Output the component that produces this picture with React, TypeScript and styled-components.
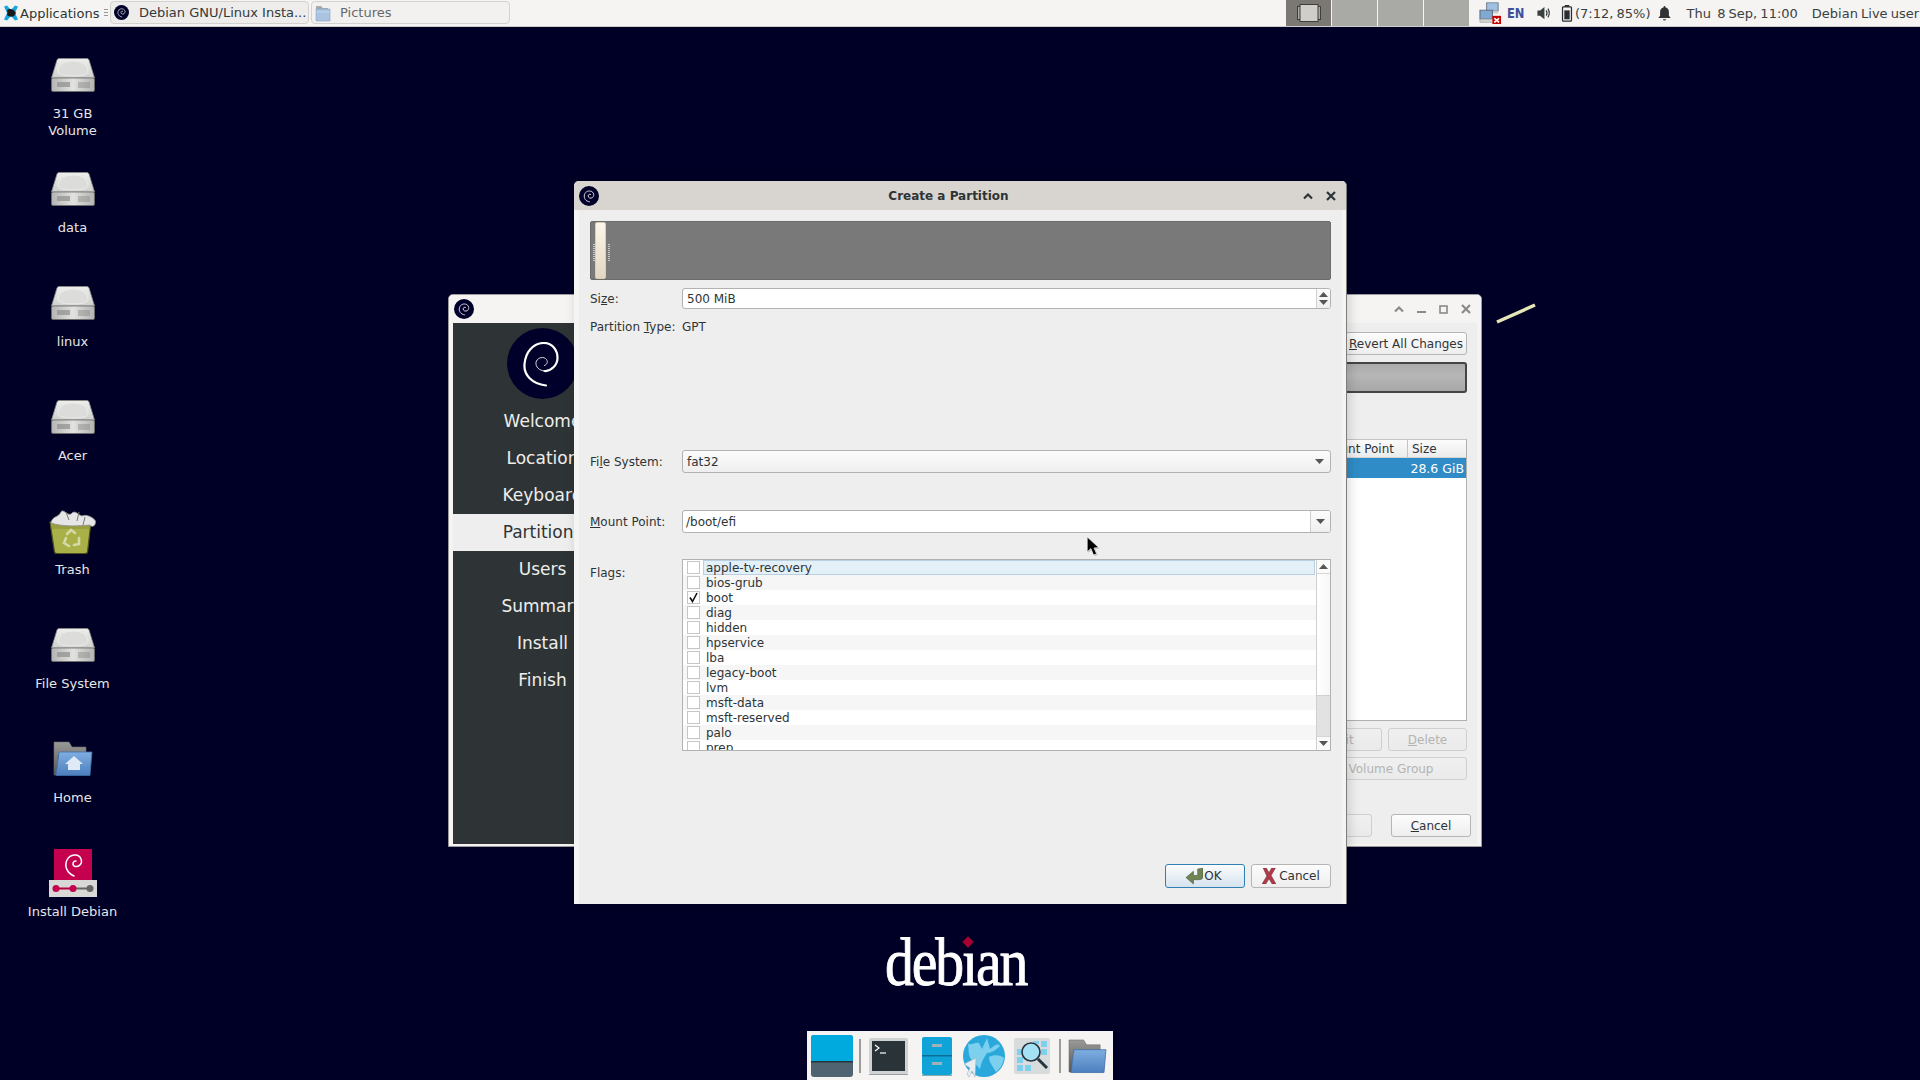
import React from "react";
import styled, { createGlobalStyle } from "styled-components";

const Global = createGlobalStyle`
  html, body { margin: 0; padding: 0; width: 1920px; height: 1080px; overflow: hidden; background: #000026; }
  * { box-sizing: border-box; }
  #root { font-family: "DejaVu Sans", sans-serif; font-size: 12px; color: #2e3436; }
`;

const Desktop = styled.div`
  position: relative; width: 1920px; height: 1080px; overflow: hidden; background: #000026;
`;

/* ---------- top panel ---------- */
const Panel = styled.header`
  display: flex; align-items: stretch; height: 27px; background: #f5f4f2;
  border-bottom: 1px solid #cfcdc9; font-size: 13px; color: #3a3f41; white-space: nowrap;
`;
const AppMenu = styled.div`
  display: flex; align-items: center; gap: 1px; width: 104px; padding-left: 3px; color: #2e3436;
`;
const Handle = styled.div`
  margin: 9px 2px 9px 0; width: 4px;
  background: repeating-linear-gradient(to bottom, #9a9a98 0 1px, transparent 1px 3px);
`;
const TaskList = styled.div`
  display: flex; gap: 2px; padding: 1px 0 2px;
`;
const TaskButton = styled.div<{ $dim?: boolean }>`
  display: flex; align-items: center; gap: 10px; width: 199px; padding: 0 3px;
  border: 1px solid #d4d2ce; border-radius: 4px;
  background: ${(p) => (p.$dim ? "#f2f1ef" : "#eeedeb")};
  color: ${(p) => (p.$dim ? "#66696a" : "#33383a")};
`;
const PanelFill = styled.div` flex: 1; `;
const Pager = styled.div` display: flex; gap: 1px; margin-right: 10px; `;
const PagerCell = styled.div<{ $active?: boolean }>`
  display: flex; align-items: center; justify-content: center; width: 45px;
  background: ${(p) => (p.$active ? "#7b7772" : "#a9a9a5")};
`;
const Tray = styled.div`
  display: flex; align-items: center; width: 441px; word-spacing: -1px;
`;
const Lang = styled.span`
  font-weight: 700; color: #3d4f9c; transform: scaleX(0.82); transform-origin: left center;
  width: 22px; margin-left: 6px; margin-right: 5px; font-size: 14px;
`;
const TrayText = styled.span<{ $gap?: number }>`
  margin-left: ${(p) => p.$gap ?? 0}px;
`;
const TrayIcon = styled.span<{ $gap?: number }>`
  display: flex; margin-left: ${(p) => p.$gap ?? 0}px;
`;

/* ---------- desktop icons ---------- */
const IconColumn = styled.div`
  position: absolute; left: 0; top: 51px; width: 145px; display: flex; flex-direction: column;
`;
const DesktopItem = styled.div`
  height: 114px; display: flex; flex-direction: column; align-items: center;
`;
const IconSlot = styled.div`
  height: 48px; display: flex; align-items: center; justify-content: center;
`;
const IconLabel = styled.div`
  margin-top: 6px; font-size: 13px; line-height: 17px; text-align: center; color: #e6e6e6; width: 110px;
`;

/* ---------- windows ---------- */
const BackWindow = styled.section`
  position: absolute; left: 448px; top: 294px; width: 1034px; height: 553px;
  display: flex; flex-direction: column; background: #f5f4f2;
  border-radius: 5px 5px 0 0; border: 1px solid #9a9a98; overflow: hidden;
`;
const BackTitle = styled.div`
  height: 28px; flex: none; display: flex; align-items: center; padding: 0 10px 0 5px;
  background: #f5f4f2; color: #777;
`;
const TitleButtons = styled.div<{ $gap: number }>`
  margin-left: auto; display: flex; gap: ${(p) => p.$gap}px; align-items: center;
`;
const BackBody = styled.div`
  flex: 1; display: flex; margin: 0 4px 2px 4px; min-height: 0; background: #eeeeee;
`;
const Sidebar = styled.nav`
  width: 179px; flex: none; display: flex; flex-direction: column; align-items: stretch;
  background: #2e3436; padding-top: 5px;
`;
const LogoWrap = styled.div`
  display: flex; justify-content: center; height: 75px;
`;
const Logo = styled.div`
  width: 71px; height: 71px; border-radius: 50%; background: #00002a;
  display: flex; align-items: center; justify-content: center;
`;
const Step = styled.div<{ $on?: boolean }>`
  height: 37px; padding-bottom: 2px; display: flex; align-items: center; justify-content: center; font-size: 17px;
  background: ${(p) => (p.$on ? "#eeeeee" : "transparent")};
  color: ${(p) => (p.$on ? "#2e3436" : "#eeeeec")};
`;
const BackMain = styled.div`
  flex: 1; display: flex; flex-direction: column; padding: 9px 10px 7px 1px; min-width: 0;
`;
const ToolRow = styled.div` display: flex; justify-content: flex-end; `;
const Btn = styled.div<{ $w?: number; $off?: boolean }>`
  width: ${(p) => (p.$w ? p.$w + "px" : "auto")}; height: 23px; padding: 0 4px; white-space: nowrap;
  display: flex; align-items: center; justify-content: center; gap: 3px;
  border: 1px solid ${(p) => (p.$off ? "#cfcfcf" : "#b5b5b3")}; border-radius: 3px;
  background: ${(p) => (p.$off ? "linear-gradient(#f0f0f0,#eaeaea)" : "linear-gradient(#fcfcfc,#eeeeee)")};
  color: ${(p) => (p.$off ? "#b4b4b4" : "#2e3436")};
`;
const DiskBar = styled.div`
  height: 31px; margin-top: 7px; border: 2px solid #444; border-radius: 3px;
  background: linear-gradient(#aaaaaa, #b6b6b6 40%, #a8a8a8);
`;
const Table = styled.div`
  margin-top: 46px; height: 282px; border: 1px solid #b0b0ae; border-top-color: #c4c4c2; background: #fff;
`;
const TableHead = styled.div`
  display: flex; height: 18px; align-items: center; background: linear-gradient(#fbfbfb,#ececec);
  border-bottom: 1px solid #d4d4d2;
`;
const HeadCell = styled.div<{ $w?: number }>`
  ${(p) => (p.$w ? `width:${p.$w}px;` : "flex:1;")} padding: 0 13px 0 4px; height: 100%;
  display: flex; align-items: center; justify-content: flex-end;
  &:last-child { justify-content: flex-start; border-left: 1px solid #c4c4c2; padding: 0 4px; }
`;
const TableRow = styled.div`
  height: 20px; display: flex; align-items: center; justify-content: flex-end; padding-right: 2px;
  background: #308cc6; color: #fff; font-size: 12.5px;
`;
const ButtonRow = styled.div<{ $top: number; $end?: number; $gap?: number }>`
  display: flex; justify-content: flex-end; gap: ${(p) => p.$gap ?? 6}px; margin-top: ${(p) => p.$top}px;
  margin-right: ${(p) => p.$end ?? 0}px;
`;

/* ---------- dialog ---------- */
const Dialog = styled.section`
  position: absolute; left: 574px; top: 181px; width: 773px; height: 723px;
  display: flex; flex-direction: column; border-radius: 5px 5px 0 0; overflow: hidden;
  background: #f4f4f3; border-right: 1px solid #7d7d7b;
  box-shadow: 2px 0 12px rgba(0, 0, 0, 0.16);
`;
const DialogTitle = styled.div`
  position: relative; flex: none; height: 29px; display: flex; align-items: center; padding: 0 10px 0 5px;
  background: #d8d5d1; color: #2e3436;
`;
const TitleText = styled.div`
  position: absolute; left: 0; right: 23px; text-align: center; font-weight: 700;
`;
const DialogBody = styled.div`
  flex: 1; display: flex; flex-direction: column; margin: 0 4px 0 5px; padding: 11px 11px 0; background: #eeeeee;
`;
const PartBar = styled.div`
  position: relative; height: 59px; flex: none; border: 1px solid #6c6c6c; border-radius: 2px; background: #797979;
`;
const PartHandle = styled.div`
  position: absolute; left: 4px; top: 0; bottom: 0; width: 11px; border: 1px solid #d9cdb6; border-radius: 2px;
  background: linear-gradient(#fdf6e8, #e2d7c3);
`;
const Grip = styled.div<{ $x: number }>`
  position: absolute; left: ${(p) => p.$x}px; top: 22px; width: 2px; height: 18px;
  background: repeating-linear-gradient(to bottom, #c8c8c8 0 1px, transparent 1px 2px);
`;
const FormRow = styled.div<{ $top: number; $h?: number }>`
  display: grid; grid-template-columns: 92px 1fr; align-items: center; flex: none;
  height: ${(p) => p.$h ?? 23}px; margin-top: ${(p) => p.$top}px;
`;
const FieldLabel = styled.label``;
const Field = styled.div`
  display: flex; align-items: stretch; height: 100%; background: #fff;
  border: 1px solid #b2b2b0; border-radius: 3px; overflow: hidden;
`;
const FieldText = styled.div<{ $pad?: number }>`
  flex: 1; display: flex; align-items: center; padding-left: ${(p) => p.$pad ?? 4}px; color: #2e3436;
`;
const ComboField = styled(Field)`
  background: linear-gradient(#fcfcfc, #eeeeee);
`;
const SideButton = styled.div<{ $w: number }>`
  width: ${(p) => p.$w}px; flex: none; display: flex; flex-direction: column; align-items: center; justify-content: center; gap: 3px;
  border-left: 1px solid #cfcfcd; background: linear-gradient(#fcfcfc, #efefef);
`;
const PlainArrow = styled.div`
  width: 22px; flex: none; display: flex; align-items: center; justify-content: center;
`;
const FlagsRow = styled.div`
  display: grid; grid-template-columns: 92px 1fr; flex: none; margin-top: 26px; height: 192px;
`;
const FlagsLabel = styled.label` margin-top: 7px; `;
const FlagsBox = styled.div`
  display: flex; border: 1px solid #b2b2b0; background: #fff; min-width: 0; overflow: hidden;
`;
const FlagsList = styled.div` flex: 1; overflow: hidden; `;
const Flag = styled.div<{ $alt: boolean }>`
  position: relative; height: 15px; display: flex; align-items: center; padding-left: 4px; gap: 6px;
  background: ${(p) => (p.$alt ? "#f6f6f6" : "#fff")};
`;
const FlagSelect = styled.div`
  position: absolute; left: 20px; right: 1px; top: 0; bottom: 0; background: #e4f0f8; border: 1px solid #b9d0e2;
`;
const Check = styled.div`
  position: relative; width: 13px; height: 13px; flex: none; background: #fff; border: 1px solid #c6c6c4;
  display: flex; align-items: center; justify-content: center;
`;
const FlagText = styled.span` position: relative; line-height: 15px; padding-top: 2px; `;
const ScrollBar = styled.div`
  width: 14px; flex: none; display: flex; flex-direction: column; border-left: 1px solid #cfcfcd;
  background: linear-gradient(90deg, #ffffff, #f6f6f6);
`;
const ScrollEnd = styled.div`
  height: 13px; flex: none; display: flex; align-items: center; justify-content: center; background: #fafafa;
`;
const ScrollTrack = styled.div`
  flex: 1; display: flex; flex-direction: column; justify-content: flex-end;
  border-top: 1px solid #d6d6d4; border-bottom: 1px solid #d6d6d4;
`;
const ScrollThumb = styled.div` height: 41px; background: #e2e2e2; border-top: 1px solid #d0d0d0; `;
const DialogActions = styled.div`
  display: flex; justify-content: flex-end; gap: 6px; margin-top: 113px;
`;
const ActionBtn = styled(Btn)<{ $def?: boolean }>`
  width: 80px; height: 24px;
  ${(p) => p.$def && "border-color:#2f7fb0; background: linear-gradient(#fbfcfd,#d5e3ee); gap: 1px; padding-right: 6px;"}
`;

/* ---------- overlays ---------- */
const Streak = styled.svg` position: absolute; left: 1495px; top: 302px; `;
const Cursor = styled.svg` position: absolute; left: 1086px; top: 536px; `;
const Wordmark = styled.div`
  position: absolute; left: 873px; top: 924px; width: 160px; height: 76px;
  font-family: "Liberation Serif", serif; font-size: 68px; line-height: 76px; color: #fff;
  text-align: center; letter-spacing: -2.5px; transform: scaleX(0.85); -webkit-text-stroke: 0.9px #fff;
`;
const Diamond = styled.div`
  position: absolute; left: 964px; top: 938px; width: 8px; height: 8px; background: #a80030; transform: rotate(45deg);
`;
const Dock = styled.div`
  position: absolute; left: 807px; top: 1031px; width: 306px; height: 49px; background: #f5f4f2;
  display: flex; align-items: center; padding: 4px 0 3px 4px;
`;
const DockSep = styled.div<{ $l: number; $r: number }>`
  width: 2px; height: 34px; margin: 0 ${(p) => p.$r}px 0 ${(p) => p.$l}px; background: #9c9c9a;
`;
const DockIcon = styled.div<{ $r?: number }>` display: flex; margin-right: ${(p) => p.$r ?? 0}px; `;

/* ---------- drawings ---------- */
const Swirl = () => (
  <svg width="36" height="45" viewBox="0 0 36 45" fill="none" style={{ transform: "translate(-2px, 1px)" }}>
    <path d="M23 43.5C9 42 0.5 33 1.5 22C2.5 10 10 1.5 20 1C29 0.5 34.5 8 34.5 16C34.5 23 28 29.5 21.5 29" stroke="#fff" strokeWidth="2.2" strokeLinecap="round" />
    <path d="M21.5 29C16 28.5 12.5 25 13 20.5C13.6 16.5 19 14 22.5 16.5C25.5 19 24.5 22.5 21.5 23.5" stroke="#dcdcdc" strokeWidth="1" strokeLinecap="round" />
  </svg>
);
const SwirlBadge = ({ size }: { size: number }) => (
  <svg width={size} height={size} viewBox="0 0 24 24" fill="none" style={{ flex: "none" }}>
    <circle cx="12" cy="12" r="12" fill="#00002a" />
    <path d="M12.5 19C8 18.5 5.5 14.5 6.5 10.5C7.5 6.5 12 5 15.3 6.7C18.2 8.4 18.4 12.4 16 14C14 15.2 11.2 14.4 11 12C10.9 10.4 12.4 9.4 13.8 10" stroke="#e8e8e8" strokeWidth="1.1" strokeLinecap="round" />
  </svg>
);
const Hdd = () => (
  <svg width="44" height="34" viewBox="0 0 44 34">
    <defs>
      <linearGradient id="hddTop" x1="0" y1="0" x2="0" y2="1"><stop offset="0" stopColor="#eeeeec" /><stop offset="1" stopColor="#cfd0cd" /></linearGradient>
      <linearGradient id="hddFront" x1="0" y1="0" x2="1" y2="0"><stop offset="0" stopColor="#b4b4b2" /><stop offset="0.5" stopColor="#e2e2e0" /><stop offset="1" stopColor="#b2b2b0" /></linearGradient>
    </defs>
    <path d="M8 .5H36Q37.5.5 38 2L43.5 20H.5L6 2Q6.5.5 8 .5Z" fill="url(#hddTop)" stroke="#8a8a88" strokeWidth=".8" />
    <path d="M7 14C7 6 14 3 22 3C30 3 37 6 37 14C37 17 30 18 22 18C14 18 7 17 7 14Z" fill="#dcdddb" stroke="#efefee" strokeWidth=".8" />
    <rect x=".5" y="20" width="43" height="13.5" rx="1.5" fill="url(#hddFront)" stroke="#6f6f6d" strokeWidth=".8" />
    <rect x="6" y="24" width="13" height="5" fill="#8f8f8d" opacity=".7" />
    <path d="M28 24v6M30 24v6M32 24v6M34 24v6M36 24v6M38 24v6" stroke="#808080" strokeWidth=".8" />
  </svg>
);
const Trash = () => (
  <svg width="47" height="46" viewBox="0 0 47 46">
    <path d="M1 14H42L38.5 44Q38 45.5 36 45.5H8Q6 45.5 5.5 44Z" fill="#a9b048" stroke="#4e5320" strokeWidth="1.2" />
    <path d="M2 14H42L41 21H3Z" fill="#8c9238" opacity=".55" />
    <path d="M2 14C5 7 9 10 12 4C14 0 18 8 22 6C26 1 29 7 33 8C37 6 44 9 46.5 13C47 18 43 20 41 17C30 18 14 19 2 15Z" fill="#e6e6e6" stroke="#8e8e8e" strokeWidth=".8" />
    <path d="M17 4L20 12M30 4L28 13M36 9L34 17" stroke="#777" strokeWidth="1" />
    <g fill="none" stroke="#d4d9a6" strokeWidth="2.6" strokeLinecap="round">
      <path d="M18 26L22 22L26 25" /><path d="M30 30L30 36L25 37" /><path d="M20 38L15 35L17 30" />
    </g>
  </svg>
);
const Folder = ({ w, h, home }: { w: number; h: number; home?: boolean }) => (
  <svg width={w} height={h} viewBox="0 0 40 36">
    <defs>
      <linearGradient id="fBack" x1="0" y1="0" x2="0" y2="1"><stop offset="0" stopColor="#9a9a98" /><stop offset="1" stopColor="#555" /></linearGradient>
      <linearGradient id="fFront" x1="0" y1="0" x2="0" y2="1"><stop offset="0" stopColor="#7faee0" /><stop offset="1" stopColor="#4c7fbe" /></linearGradient>
    </defs>
    <path d="M1 1H16L19 6H33V14H5V34H1Z" fill="url(#fBack)" stroke="#6a6a68" strokeWidth=".6" />
    <path d="M6 11H39L37 34.5H3Z" fill="url(#fFront)" stroke="#3f6ea8" strokeWidth=".8" />
    {home && <path d="M21 15L30 23H27V29H15V23H12Z" fill="#dfeaf6" />}
  </svg>
);
const InstallIcon = () => (
  <svg width="48" height="48" viewBox="0 0 48 48">
    <rect x="5" y="0" width="38" height="32" fill="#c4004f" />
    <path d="M25 27C18 24 15 17 18 11C21 5 30 4 32 10C34 15 29 19 25 17C23 15 24 12 27 12" fill="none" stroke="#fff" strokeWidth="1.5" strokeLinecap="round" />
    <rect x="0" y="31" width="48" height="17" fill="#d8d8d6" />
    <path d="M7 39.5H24" stroke="#b5003f" strokeWidth="2" /><path d="M24 39.5H41" stroke="#666" strokeWidth="2" />
    <circle cx="7" cy="39.5" r="3.5" fill="#c4004f" /><circle cx="24" cy="39.5" r="3.5" fill="#c4004f" /><circle cx="41" cy="39.5" r="3.5" fill="#666" />
  </svg>
);
const XfceMark = () => (
  <svg width="16" height="16" viewBox="0 0 16 16">
    <path d="M1 1.5L4 .5L8 5L12 .5L15 1.5L12 8L15 14.5L12 15.5L8 11L4 15.5L1 14.5L4 8Z" fill="#18a6e0" />
    <path d="M4 5C6 3.5 9 4 11 5.5L13 8L11 11C9 12 6 12 4 10Q5 8 4 5Z" fill="#1a1a1a" />
  </svg>
);
const PicturesFolder = () => (
  <svg width="16" height="18" viewBox="0 0 16 18" style={{ marginRight: -1 }}>
    <path d="M1 2H6L8 4H13V8H1Z" fill="#a9a9a7" /><path d="M1 5H15V17H1Z" fill="#a9c3e0" stroke="#87a3c4" strokeWidth=".6" /><path d="M1 8H15" stroke="#c5d8ec" />
  </svg>
);
const PagerWin = () => (
  <svg width="24" height="18" viewBox="0 0 24 18">
    <rect x=".5" y="2.5" width="23" height="13" fill="#aaa8a2" stroke="#3e3e3c" strokeWidth="1" />
    <rect x="3" y=".5" width="18" height="17" fill="#d0cec8" stroke="#3e3e3c" strokeWidth="1" />
  </svg>
);
const Net = () => (
  <svg width="22" height="22" viewBox="0 0 23 27" preserveAspectRatio="none">
    <rect x="8" y="1" width="12" height="10" fill="#9fc0e2" stroke="#6c7a88" />
    <rect x="10" y="11" width="10" height="3" fill="#c9c9c7" />
    <rect x="1" y="10" width="13" height="11" fill="#7fa8d2" stroke="#5a6874" />
    <rect x="1" y="21" width="14" height="4" fill="#d0d0ce" stroke="#9a9a98" strokeWidth=".6" />
    <rect x="14" y="17" width="9" height="10" fill="#c40000" />
    <path d="M16 20L21 25M21 20L16 25" stroke="#fff" strokeWidth="1.8" />
  </svg>
);
const Volume = () => (
  <svg width="16" height="14" viewBox="0 0 17 16" fill="none">
    <path d="M1 5H4L9 1V15L4 11H1Z" fill="#3b3f40" />
    <path d="M11 5Q13 8 11 11M13 3Q16 8 13 13" stroke="#3b3f40" strokeWidth="1.4" />
  </svg>
);
const Battery = () => (
  <svg width="12" height="17" viewBox="0 0 12 19" fill="none">
    <rect x="3.5" y="0" width="5" height="2" fill="#2a2e30" />
    <rect x="1" y="2" width="10" height="16" rx="1" stroke="#2a2e30" strokeWidth="1.4" />
    <rect x="3" y="6" width="6" height="10" fill="#2a2e30" />
  </svg>
);
const Bell = () => (
  <svg width="13" height="15" viewBox="0 0 14 17">
    <path d="M7 0Q8 0 8 1.5Q12 2.5 12 7V11L14 13.5H0L2 11V7Q2 2.5 6 1.5Q6 0 7 0Z" fill="#2f3335" />
    <path d="M5 15H9Q8.5 16.5 7 16.5T5 15Z" fill="#2f3335" />
  </svg>
);
const Chevron = ({ color }: { color: string }) => (
  <svg width="10" height="8" viewBox="0 0 10 8" fill="none"><path d="M1 6.5L5 2.5L9 6.5" stroke={color} strokeWidth="2.2" /></svg>
);
const Cross = ({ color }: { color: string }) => (
  <svg width="10" height="10" viewBox="0 0 10 10" fill="none"><path d="M1 1L9 9M9 1L1 9" stroke={color} strokeWidth="2.2" /></svg>
);
const Minim = ({ color }: { color: string }) => (
  <svg width="9" height="10" viewBox="0 0 9 10"><rect x="0" y="7" width="9" height="2" fill={color} /></svg>
);
const Maxim = ({ color }: { color: string }) => (
  <svg width="9" height="9" viewBox="0 0 9 9" fill="none"><rect x="1" y="1" width="7" height="7" stroke={color} strokeWidth="1.6" /></svg>
);
const Tri = ({ up, color = "#555" }: { up?: boolean; color?: string }) => (
  <svg width="9" height="5" viewBox="0 0 9 5"><path d={up ? "M0 5L4.5 0L9 5Z" : "M0 0L9 0L4.5 5Z"} fill={color} /></svg>
);
const Tick = () => (
  <svg width="11" height="11" viewBox="0 0 11 11" fill="none"><path d="M2 5.5L4.5 9.5L9 1" stroke="#111" strokeWidth="1.6" /></svg>
);
const OkIcon = () => (
  <svg width="17" height="17" viewBox="0 0 16 16"><path d="M16 0V8Q16 11 12 11H7V15L0 9L7 3V7H11V1Z" fill="#6f8454" stroke="#3e4e30" strokeWidth=".5" /></svg>
);
const CancelIcon = () => (
  <svg width="14" height="16" viewBox="0 0 13 15"><path d="M1 0H4L6.5 4.5L9 0H12.5L8.5 7L13 15H9.5L6.5 10L3.5 15H0L4.5 7.5Z" fill="#b23a48" stroke="#6a2a30" strokeWidth=".5" /></svg>
);

const DockDesktop = () => (
  <svg width="42" height="42" viewBox="0 0 42 42">
    <rect x="0" y="0" width="42" height="42" rx="3" fill="#4f6470" />
    <path d="M0 3Q0 0 3 0H39Q42 0 42 3V26H0Z" fill="#00a9de" />
    <rect x="0" y="26" width="42" height="1.5" fill="#26343c" />
  </svg>
);
const DockTerminal = () => (
  <svg width="39" height="37" viewBox="0 0 39 37">
    <rect x="0" y="0" width="39" height="36" rx="2" fill="#cfd3d4" />
    <rect x="3" y="3" width="33" height="30" fill="#2a3338" />
    <path d="M6 7L10 10L6 13" fill="none" stroke="#fff" strokeWidth="1.2" /><path d="M11 15H17" stroke="#fff" strokeWidth="1.2" />
    <rect x="0" y="36" width="39" height="1" fill="#9aa0a2" />
  </svg>
);
const DockFiles = () => (
  <svg width="30" height="39" viewBox="0 0 30 39">
    <rect width="30" height="38" rx="2" fill="#0fa3d8" /><rect y="18" width="30" height="1.5" fill="#0d6f95" />
    <rect x="10" y="7" width="10" height="3" fill="#9fb0b8" /><rect x="10" y="25" width="10" height="3" fill="#9fb0b8" />
    <rect y="38" width="30" height="1" fill="#8aa" />
  </svg>
);
const DockGlobe = () => (
  <svg width="42" height="42" viewBox="0 0 42 42">
    <circle cx="21" cy="21" r="21" fill="#2aa8dc" />
    <path d="M5 9C10 10 12 7 16 8L19 14L24 3L27 14C32 10 35 8 37 11C33 15 28 18 24 18C20 24 18 28 17 34L8 24C5 20 6 14 5 9Z" fill="#7cd0ee" />
    <path d="M26 22C31 19 38 20 41 23C40 29 37 34 33 37C30 31 26 28 26 22Z" fill="#7cd0ee" />
    <path d="M1 29L13 23L12 42L9 36L6 42L4 39L7 33Z" fill="#e6eef2" stroke="#9fb3bd" strokeWidth=".6" />
  </svg>
);
const DockSearch = () => (
  <svg width="36" height="36" viewBox="0 0 36 36">
    <rect width="36" height="36" rx="2" fill="#d8dcdd" />
    <g fill="#7ed0ee"><rect x="27" y="3" width="6" height="6" /><rect x="27" y="11" width="6" height="6" /><rect x="3" y="11" width="6" height="6" /><rect x="3" y="19" width="6" height="6" /><rect x="3" y="27" width="6" height="6" /><rect x="11" y="27" width="6" height="6" /><rect x="19" y="3" width="6" height="3" /></g>
    <circle cx="17" cy="14" r="9" fill="#a4e1f4" stroke="#26343c" strokeWidth="1.6" />
    <path d="M24 21L33 30" stroke="#26343c" strokeWidth="3" />
  </svg>
);

const FLAGS = ["apple-tv-recovery","bios-grub","boot","diag","hidden","hpservice","lba","legacy-boot","lvm","msft-data","msft-reserved","palo","prep"];
const STEPS = ["Welcome","Location","Keyboard","Partitions","Users","Summary","Install","Finish"];
const ICONS: { label: React.ReactNode; icon: React.ReactNode }[] = [
  { label: <>31 GB<br />Volume</>, icon: <Hdd /> },
  { label: "data", icon: <Hdd /> },
  { label: "linux", icon: <Hdd /> },
  { label: "Acer", icon: <Hdd /> },
  { label: "Trash", icon: <Trash /> },
  { label: "File System", icon: <Hdd /> },
  { label: "Home", icon: <Folder w={40} h={36} home /> },
  { label: "Install Debian", icon: <InstallIcon /> },
];

export default function App() {
  return (
    <Desktop>
      <Global />
      <Panel>
        <AppMenu><XfceMark />Applications</AppMenu>
        <Handle />
        <TaskList>
          <TaskButton><SwirlBadge size={15} />Debian GNU/Linux Insta...</TaskButton>
          <TaskButton $dim><PicturesFolder />Pictures</TaskButton>
        </TaskList>
        <PanelFill />
        <Pager>
          <PagerCell $active><PagerWin /></PagerCell>
          <PagerCell /><PagerCell /><PagerCell />
        </Pager>
        <Tray>
          <TrayIcon><Net /></TrayIcon>
          <Lang>EN</Lang>
          <TrayIcon $gap={2}><Volume /></TrayIcon>
          <TrayIcon $gap={9}><Battery /></TrayIcon>
          <TrayText $gap={2}>(7:12, 85%)</TrayText>
          <TrayIcon $gap={7}><Bell /></TrayIcon>
          <TrayText $gap={16}>Thu&nbsp; 8 Sep, 11:00</TrayText>
          <TrayText $gap={14}>Debian Live user</TrayText>
        </Tray>
      </Panel>

      <IconColumn>
        {ICONS.map((it, i) => (
          <DesktopItem key={i}>
            <IconSlot>{it.icon}</IconSlot>
            <IconLabel>{it.label}</IconLabel>
          </DesktopItem>
        ))}
      </IconColumn>

      <BackWindow>
        <BackTitle>
          <SwirlBadge size={20} />
          <TitleButtons $gap={13}>
            <Chevron color="#8a8a88" /><Minim color="#8a8a88" /><Maxim color="#8a8a88" /><Cross color="#8a8a88" />
          </TitleButtons>
        </BackTitle>
        <BackBody>
          <Sidebar>
            <LogoWrap><Logo><Swirl /></Logo></LogoWrap>
            {STEPS.map((s, i) => <Step key={s} $on={i === 3}>{s}</Step>)}
          </Sidebar>
          <BackMain>
            <ToolRow><Btn $w={122}><span><u>R</u>evert All Changes</span></Btn></ToolRow>
            <DiskBar />
            <Table>
              <TableHead><HeadCell>Mount Point</HeadCell><HeadCell $w={59}>Size</HeadCell></TableHead>
              <TableRow>28.6 GiB</TableRow>
            </Table>
            <ButtonRow $top={7}><Btn $w={80} $off>Edit</Btn><Btn $w={79} $off><span><u>D</u>elete</span></Btn></ButtonRow>
            <ButtonRow $top={6}><Btn $w={152} $off>Volume Group</Btn></ButtonRow>
            <ButtonRow $top={34} $end={-4} $gap={19}><Btn $w={80} $off>Next</Btn><Btn $w={80}><span><u>C</u>ancel</span></Btn></ButtonRow>
          </BackMain>
        </BackBody>
      </BackWindow>

      <Streak width="42" height="24" viewBox="0 0 42 24"><path d="M2 20L40 3" stroke="#e6e6b8" strokeWidth="3.4" /></Streak>

      <Dialog>
        <DialogTitle>
          <SwirlBadge size={20} />
          <TitleText>Create a Partition</TitleText>
          <TitleButtons $gap={13}><Chevron color="#2e3436" /><Cross color="#2e3436" /></TitleButtons>
        </DialogTitle>
        <DialogBody>
          <PartBar>
            <Grip $x={2} /><PartHandle /><Grip $x={17} />
          </PartBar>
          <FormRow $top={8} $h={21}>
            <FieldLabel>Si<u>z</u>e:</FieldLabel>
            <Field><FieldText>500 MiB</FieldText><SideButton $w={14}><Tri up /><Tri /></SideButton></Field>
          </FormRow>
          <FormRow $top={7} $h={22}>
            <FieldLabel>Partition <u>T</u>ype:</FieldLabel>
            <div>GPT</div>
          </FormRow>
          <FormRow $top={112}>
            <FieldLabel>Fi<u>l</u>e System:</FieldLabel>
            <ComboField><FieldText>fat32</FieldText><PlainArrow><Tri /></PlainArrow></ComboField>
          </FormRow>
          <FormRow $top={37}>
            <FieldLabel><u>M</u>ount Point:</FieldLabel>
            <Field><FieldText $pad={3}>/boot/efi</FieldText><SideButton $w={20}><Tri /></SideButton></Field>
          </FormRow>
          <FlagsRow>
            <FlagsLabel>Flags:</FlagsLabel>
            <FlagsBox>
              <FlagsList>
                {FLAGS.map((f, i) => (
                  <Flag key={f} $alt={i % 2 === 1}>
                    {i === 0 && <FlagSelect />}
                    <Check>{f === "boot" && <Tick />}</Check>
                    <FlagText>{f}</FlagText>
                  </Flag>
                ))}
              </FlagsList>
              <ScrollBar>
                <ScrollEnd><Tri up /></ScrollEnd>
                <ScrollTrack><ScrollThumb /></ScrollTrack>
                <ScrollEnd><Tri /></ScrollEnd>
              </ScrollBar>
            </FlagsBox>
          </FlagsRow>
          <DialogActions>
            <ActionBtn $def><OkIcon />OK</ActionBtn>
            <ActionBtn><CancelIcon />Cancel</ActionBtn>
          </DialogActions>
        </DialogBody>
      </Dialog>

      <Cursor width="15" height="21" viewBox="0 0 14 20">
        <path d="M2 2V16L5.5 13L8 19L11 18L8.500 12.500L13 12Z" fill="#8a8a8a" opacity=".5" />
        <path d="M1 1V15L4.500 12L7 18L10 17L7.500 11.500L12 11Z" fill="#000" stroke="#eee" strokeWidth=".7" />
      </Cursor>

      <Wordmark>debıan</Wordmark>
      <Diamond />
      <Dock>
        <DockIcon><DockDesktop /></DockIcon>
        <DockSep $l={6} $r={8} />
        <DockIcon $r={14}><DockTerminal /></DockIcon>
        <DockIcon $r={11}><DockFiles /></DockIcon>
        <DockIcon $r={9}><DockGlobe /></DockIcon>
        <DockIcon><DockSearch /></DockIcon>
        <DockSep $l={9} $r={7} />
        <DockIcon><Folder w={39} h={35} /></DockIcon>
      </Dock>
    </Desktop>
  );
}
